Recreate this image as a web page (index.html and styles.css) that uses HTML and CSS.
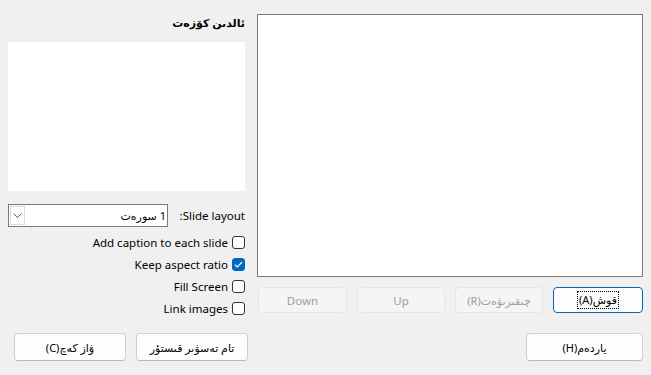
FILE: index.html
```html
<!DOCTYPE html>
<html>
<head>
<meta charset="utf-8">
<link rel="stylesheet" href="styles.css">
</head>
<body>
<div class="dialog">
  <div class="main">
    <div class="left">
      <div class="title ar" dir="rtl">ئالدىن كۆزەت</div>
      <div class="thumb"></div>
      <div class="layout-row">
        <div class="combo">
          <div class="combo-btn">
            <svg width="9" height="5" viewBox="0 0 9 5"><path d="M0.5 0.5 L4.5 4.5 L8.5 0.5" fill="none" stroke="#555" stroke-width="1"/></svg>
          </div>
          <div class="combo-text ar" dir="rtl">1 سورەت</div>
        </div>
        <div class="layout-label" dir="rtl">Slide layout:</div>
      </div>
      <div class="checks">
        <label class="check-row"><span class="check-label">Add caption to each slide</span><span class="box"></span></label>
        <label class="check-row"><span class="check-label">Keep aspect ratio</span><span class="box checked"><svg width="9" height="7" viewBox="0 0 9 7"><path d="M0.8 3.6 L3.2 6 L8.2 1" fill="none" stroke="#fff" stroke-width="1.1"/></svg></span></label>
        <label class="check-row"><span class="check-label">Fill Screen</span><span class="box"></span></label>
        <label class="check-row"><span class="check-label">Link images</span><span class="box"></span></label>
      </div>
    </div>
    <div class="right">
      <div class="list"></div>
      <div class="btn-row">
        <div class="btn disabled">Down</div>
        <div class="btn disabled">Up</div>
        <div class="btn disabled ar" dir="rtl">چىقىرىۋەت(R)</div>
        <div class="btn default ar"><span class="focus" dir="rtl">قوش(A)</span></div>
      </div>
    </div>
  </div>
  <div class="footer">
    <div class="footer-left">
      <div class="btn wide ar" dir="rtl">ۋاز كەچ(C)</div>
      <div class="btn wide ar" dir="rtl">تام تەسۋىر قىستۇر</div>
    </div>
    <div class="btn wide help ar" dir="rtl">ياردەم(H)</div>
  </div>
</div>
</body>
</html>
```

FILE: styles.css
```css
html, body {
  margin: 0;
  padding: 0;
  background: #f0f0f0;
}
body {
  width: 651px;
  height: 375px;
  overflow: hidden;
  font-family: "Noto Sans", "DejaVu Sans", sans-serif;
  font-size: 11.5px;
  color: #000;
}
.ar {
  font-size: 11px;
}
.dialog {
  padding: 14px 8px 0 8px;
}
.main {
  display: flex;
  align-items: flex-start;
  gap: 12px;
}
.left {
  width: 237px;
  display: flex;
  flex-direction: column;
}
.title {
  height: 28px;
  line-height: 18px;
  font-weight: bold;
  text-align: right;
}
.thumb {
  height: 149px;
  background: #fff;
}
.layout-row {
  margin-top: 13px;
  display: flex;
  align-items: center;
  height: 23px;
}
.combo {
  width: 158px;
  height: 21px;
  border: 1px solid #7a7a7a;
  background: #fff;
  display: flex;
}
.combo-btn {
  width: 15px;
  height: 19px;
  margin: 1px 0 1px 1px;
  border: 1px solid #dadada;
  box-sizing: border-box;
  display: flex;
  align-items: center;
  justify-content: center;
  background: #fff;
}
.combo-text {
  flex: 1;
  line-height: 21px;
  text-align: right;
  padding-right: 1px;
  white-space: nowrap;
}
.layout-label {
  flex: 1;
  text-align: right;
}
.checks {
  margin-top: 4px;
  display: flex;
  flex-direction: column;
}
.check-row {
  height: 22px;
  display: flex;
  align-items: center;
  justify-content: flex-end;
  gap: 4px;
}
.box {
  width: 13px;
  height: 13px;
  box-sizing: border-box;
  border: 1px solid #333;
  border-radius: 3px;
  background: #fff;
  display: flex;
  align-items: center;
  justify-content: center;
}
.box.checked {
  background: #0067c0;
  border-color: #0067c0;
}
.right {
  width: 386px;
  display: flex;
  flex-direction: column;
}
.list {
  height: 263px;
  box-sizing: border-box;
  border: 1px solid #7a7a7a;
  background: #fff;
}
.btn-row {
  margin-top: 10px;
  padding-left: 1px;
  display: grid;
  grid-template-columns: 89px 88px 88px 90px;
  gap: 10px;
}
.btn {
  height: 26px;
  box-sizing: border-box;
  border: 1px solid #d0d0d0;
  border-bottom-color: #b9b9b9;
  border-radius: 4px;
  background: #fdfdfd;
  display: flex;
  align-items: center;
  justify-content: center;
  white-space: nowrap;
}
.btn.disabled {
  background: #f5f5f5;
  border-color: #e5e5e5;
  color: #9d9d9d;
}
.btn.default {
  border: 1px solid #0067c0;
}
.focus {
  outline: 1px dotted #000;
  padding: 0 1px;
  line-height: 16px;
}
.footer {
  margin-top: 14px;
  padding-left: 6px;
  display: flex;
  justify-content: space-between;
}
.footer-left {
  display: flex;
  gap: 10px;
}
.btn.wide {
  width: 112px;
  height: 28px;
}
.btn.help {
  width: 117px;
}
```
